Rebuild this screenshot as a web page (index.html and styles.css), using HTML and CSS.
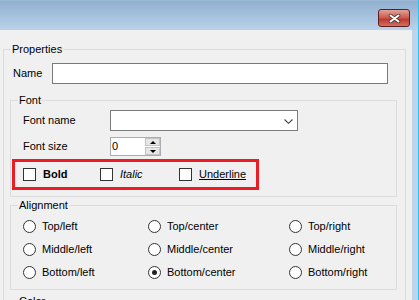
FILE: index.html
```html
<!DOCTYPE html>
<html lang="en">
<head>
    <meta charset="UTF-8">
    <meta name="viewport" content="width=device-width, initial-scale=1.0">
    <title>Text Properties</title>
    <link rel="stylesheet" href="styles.css">
</head>

<body>
    <div class="window">
        <div class="titlebar">
            <button class="close" type="button" aria-label="Close">
                <svg width="13" height="9" viewBox="0 0 13 9">
                    <path d="M2.5 1.5 L10.5 7.5 M10.5 1.5 L2.5 7.5" stroke="#4a3a3a" stroke-width="3.6" stroke-linecap="round"/>
                    <path d="M2.5 1.5 L10.5 7.5 M10.5 1.5 L2.5 7.5" stroke="#fff" stroke-width="2" stroke-linecap="round"/>
                </svg>
            </button>
        </div>

        <div class="frame">
            <div class="client">
                <fieldset class="group props">
                    <legend>Properties</legend>

                    <div class="name-row">
                        <label for="name">Name</label>
                        <input type="text" id="name" class="text-box">
                    </div>

                    <fieldset class="group font">
                        <legend>Font</legend>

                        <div class="font-row">
                            <label>Font name</label>
                            <div class="combo">
                                <svg width="9" height="5" viewBox="0 0 9 5">
                                    <polyline points="0.5,0.5 4.5,4.3 8.5,0.5" fill="none" stroke="#444" stroke-width="1.1"/>
                                </svg>
                            </div>
                        </div>

                        <div class="font-row size-row">
                            <label>Font size</label>
                            <div class="spin">
                                <span class="spin-value">0</span>
                                <div class="spin-buttons">
                                    <span class="spin-btn"><i class="arrow-up"></i></span>
                                    <span class="spin-btn"><i class="arrow-down"></i></span>
                                </div>
                            </div>
                        </div>

                        <div class="style-box">
                            <label class="check check-bold"><span class="box"></span><b>Bold</b></label>
                            <label class="check check-italic"><span class="box"></span><i>Italic</i></label>
                            <label class="check"><span class="box"></span><u>Underline</u></label>
                        </div>
                    </fieldset>

                    <fieldset class="group align">
                        <legend>Alignment</legend>
                        <div class="radio-grid">
                            <label class="radio"><span class="dot"></span>Top/left</label>
                            <label class="radio"><span class="dot"></span>Top/center</label>
                            <label class="radio"><span class="dot"></span>Top/right</label>
                            <label class="radio"><span class="dot"></span>Middle/left</label>
                            <label class="radio"><span class="dot"></span>Middle/center</label>
                            <label class="radio"><span class="dot"></span>Middle/right</label>
                            <label class="radio"><span class="dot"></span>Bottom/left</label>
                            <label class="radio"><span class="dot checked"></span>Bottom/center</label>
                            <label class="radio"><span class="dot"></span>Bottom/right</label>
                        </div>
                    </fieldset>

                    <fieldset class="group color">
                        <legend>Color</legend>
                    </fieldset>
                </fieldset>
            </div>
        </div>
    </div>
</body>
</html>
```

FILE: styles.css
```css
body {
    margin: 0;
    width: 419px;
    height: 300px;
    overflow: hidden;
    font-family: "Liberation Sans", Arial, sans-serif;
    font-size: 11px;
    line-height: 13px;
    color: #000;
}

.window {
    width: 418px;
    height: 300px;
    border-right: 1px solid #2bc4f2;
    display: flex;
    flex-direction: column;
}

.titlebar {
    height: 30px;
    flex-shrink: 0;
    background: linear-gradient(#a8c2dd 0, #91b0d0 1px, #bad2ea 100%);
    display: flex;
    justify-content: flex-end;
    align-items: flex-start;
}

.close {
    margin: 9px 8px 0 0;
    width: 32px;
    height: 18px;
    padding: 0;
    border: 1px solid #5e1f1f;
    border-radius: 3px;
    background: linear-gradient(#e2a397, #cd6054 45%, #bf3a30 60%, #d27062);
    display: flex;
    align-items: center;
    justify-content: center;
}

.frame {
    flex: 1;
    display: flex;
    background: #bcd4ec;
    padding-right: 6px;
    min-height: 0;
}

.client {
    width: 412px;
    background: #f0f0f0;
    overflow: hidden;
}

/* group boxes */
.group {
    margin: 0;
    padding: 0;
    min-width: 0;
    border: 1px solid #dcdcdc;
}

.group legend {
    margin-left: 7px;
    padding: 0 1px;
    line-height: 13px;
}

.props {
    width: 397px;
    margin: 13px 0 0 3px;
    padding: 0 4px 0 0;
    height: 400px;
}

.name-row {
    display: flex;
    align-items: center;
    margin: 7px 0 0 9px;
}

.name-row label {
    width: 39px;
}

.text-box {
    width: 336px;
    height: 21px;
    box-sizing: border-box;
    border: 1px solid #7a7a7a;
    background: #fff;
    margin: 0;
    padding: 0;
}

.font {
    width: 385px;
    margin: 10px 0 0 6px;
    padding: 0 0 6px 0;
}

.font-row {
    display: flex;
    align-items: center;
    margin: 3px 0 0 12px;
}

.font-row label {
    width: 87px;
}

.size-row {
    margin-top: 6px;
}

.combo {
    width: 188px;
    height: 21px;
    box-sizing: border-box;
    border: 1px solid #7a7a7a;
    background: #fff;
    display: flex;
    align-items: center;
    justify-content: flex-end;
    padding: 1px 4px 0 0;
}

.spin {
    width: 51px;
    height: 19px;
    box-sizing: border-box;
    border: 1px solid #abadb3;
    background: #fff;
    display: flex;
}

.spin-value {
    flex: 1;
    padding-left: 1px;
    line-height: 17px;
}

.spin-buttons {
    width: 15px;
    display: flex;
    flex-direction: column;
    gap: 1px;
}

.spin-btn {
    flex: 1;
    background: #e6e6e6;
    border: 1px solid #c4c4c4;
    display: flex;
    align-items: center;
    justify-content: center;
}

.arrow-up {
    border-left: 3px solid transparent;
    border-right: 3px solid transparent;
    border-bottom: 3px solid #000;
}

.arrow-down {
    border-left: 3px solid transparent;
    border-right: 3px solid transparent;
    border-top: 3px solid #000;
}

.style-box {
    width: 247px;
    height: 31px;
    box-sizing: border-box;
    margin: 3px 0 0 1px;
    border: 3px solid #ec1c24;
    padding-left: 8px;
    display: flex;
    align-items: center;
}

.check {
    display: flex;
    align-items: center;
    gap: 7px;
}

.check-bold {
    width: 77px;
}

.check-italic {
    width: 79px;
}

.box {
    width: 13px;
    height: 13px;
    box-sizing: border-box;
    border: 1px solid #333;
    background: #fff;
}

.align {
    width: 385px;
    margin: 2px 0 0 6px;
    padding: 3px 0 5px 0;
}

.radio-grid {
    display: grid;
    grid-template-columns: 125px 141px 1fr;
    grid-auto-rows: 23px;
    margin-left: 12px;
}

.radio {
    display: flex;
    align-items: center;
    gap: 6px;
}

.dot {
    width: 13px;
    height: 13px;
    box-sizing: border-box;
    border: 1px solid #333;
    border-radius: 50%;
    background: #fff;
    display: flex;
    align-items: center;
    justify-content: center;
}

.dot.checked::after {
    content: "";
    width: 5px;
    height: 5px;
    border-radius: 50%;
    background: #222;
}

.color {
    width: 385px;
    margin: 5px 0 0 6px;
    height: 60px;
}
```
